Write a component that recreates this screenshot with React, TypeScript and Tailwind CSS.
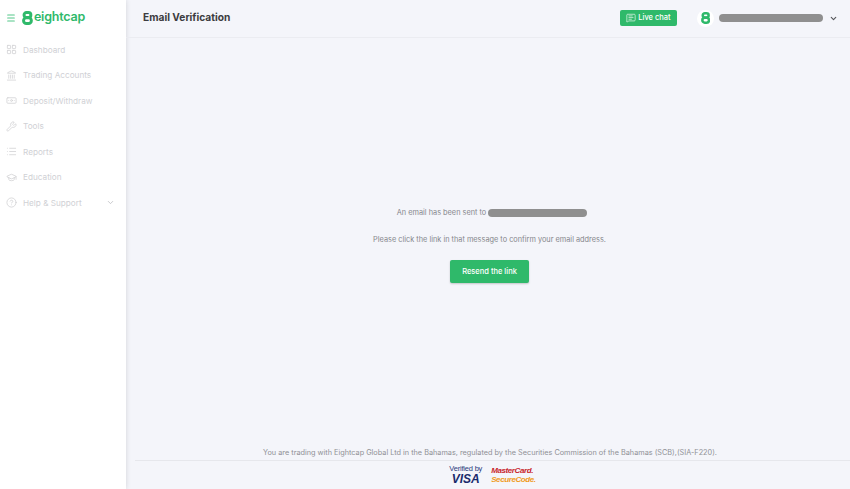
import React from "react";
import { Menu, LayoutGrid, Landmark, Banknote, Wrench, List, GraduationCap, CircleHelp, ChevronDown, MessageSquareText } from "lucide-react";

const items = [
  { label: "Dashboard", Icon: LayoutGrid },
  { label: "Trading Accounts", Icon: Landmark },
  { label: "Deposit/Withdraw", Icon: Banknote },
  { label: "Tools", Icon: Wrench },
  { label: "Reports", Icon: List },
  { label: "Education", Icon: GraduationCap },
  { label: "Help & Support", Icon: CircleHelp, chevron: true },
];

function Eight({ size }: { size: number }) {
  return (
    <svg width={size * 0.78} height={size} viewBox="0 0 14 18" fill="none" stroke="#2fb96a" strokeWidth="3.8">
      <rect x="2.6" y="2" width="8.8" height="6.2" rx="3.1" />
      <rect x="2" y="8.6" width="10" height="7.4" rx="3.6" />
    </svg>
  );
}

export default function App() {
  return (
    <div className="flex h-[489px] w-[850px] overflow-hidden bg-[#f4f5fa] font-['Inter','Liberation_Sans',sans-serif]">
      <aside className="flex w-[126px] shrink-0 flex-col bg-white shadow-[0_0_5px_rgba(0,0,0,0.14)]">
        <div className="flex h-[35px] items-center pl-[6px]">
          <Menu size={10} strokeWidth={2.5} className="text-[#55c78a]" />
          <span className="ml-[6px] flex"><Eight size={14} /></span>
          <span className="ml-[1px] text-[12.5px] font-semibold tracking-[-0.2px] text-[#2fb96a]">eightcap</span>
        </div>
        <nav className="mt-[2px] flex flex-col">
          {items.map(({ label, Icon, chevron }) => (
            <div key={label} className="flex h-[25.5px] items-center pl-[6px] pr-[11px]">
              <Icon size={11} strokeWidth={1.7} className="text-[#d0d0d3]" />
              <span className="ml-[6px] whitespace-nowrap text-[8.2px] text-[#d0d1d5]">{label}</span>
              {chevron && <ChevronDown size={9} className="ml-auto text-[#b8b9bd]" />}
            </div>
          ))}
        </nav>
      </aside>

      <main className="flex min-w-0 flex-1 flex-col">
        <header className="flex h-[38px] shrink-0 items-center border-b border-[#ebecf1] pb-[1px] pl-[17px] pr-[12px]">
          <h1 className="text-[10.2px] font-bold text-[#3c3c40]">Email Verification</h1>
          <button className="ml-auto flex h-[16px] w-[57px] items-center justify-center gap-[2px] rounded-[2px] bg-[#2fb96a] text-[7.5px] font-medium text-white">
            <MessageSquareText size={10} strokeWidth={1.5} />
            Live chat
          </button>
          <div className="ml-[20px] flex h-[17px] w-[17px] items-center justify-center rounded-full bg-white">
            <Eight size={12} />
          </div>
          <div className="ml-[5px] h-[8px] w-[104px] rounded-full bg-[#8f8f8f]" />
          <ChevronDown size={9} strokeWidth={3} className="ml-[6px] text-[#55565a]" />
        </header>

        <section className="flex flex-1 flex-col items-center pl-[3px] pt-[169px]">
          <div className="flex h-[12px] items-center pl-[5px] text-[7.35px] text-[#85868b]">
            An email has been sent to
            <span className="ml-[2px] h-[8px] w-[99px] rounded-full bg-[#8f8f8f]" />
          </div>
          <p className="mt-[15px] text-[7.35px] leading-[12px] text-[#85868b]">
            Please click the link in that message to confirm your email address.
          </p>
          <button className="mt-[14px] h-[23px] w-[79px] rounded-[2px] bg-[#2fb96a] text-[7.5px] font-medium text-white shadow-[0_1px_2px_rgba(0,0,0,0.2)]">
            Resend the link
          </button>
        </section>

        <footer className="ml-[9px] flex shrink-0 flex-col items-center">
          <p className="pr-[5px] text-[7.3px] leading-[12px] text-[#8f9095]">
            You are trading with Eightcap Global Ltd in the Bahamas, regulated by the Securities Commission of the Bahamas (SCB),(SIA-F220).
          </p>
          <div className="mt-[1px] flex h-[29px] w-full items-center justify-center gap-[9px] border-t border-[#e6e7ec]">
            <div className="flex flex-col items-center font-['Liberation_Sans',sans-serif] leading-none">
              <span className="text-[7.5px] tracking-[-0.2px] text-[#2b3a7d]">Verified by</span>
              <span className="text-[12px] font-bold italic text-[#1a2a6c]">VISA</span>
            </div>
            <div className="flex flex-col items-start font-['Liberation_Sans',sans-serif] font-bold italic leading-[9px]">
              <span className="text-[8px] tracking-[-0.4px] text-[#c8252c]">MasterCard.</span>
              <span className="text-[8px] tracking-[-0.4px] text-[#f09a1a]">SecureCode.</span>
            </div>
          </div>
        </footer>
      </main>
    </div>
  );
}
